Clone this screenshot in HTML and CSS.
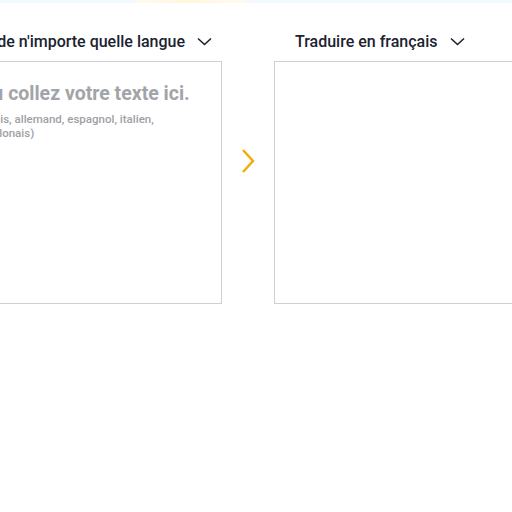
FILE: index.html
```html
<!DOCTYPE html>
<html lang="fr">
<head>
<meta charset="utf-8">
<link rel="stylesheet" href="styles.css">
</head>
<body>
<div class="topstrip"><div class="topglow"></div></div>
<main class="translator">
  <section class="panel panel--src">
    <div class="panel-head">
      <span class="lang">Traduire de n'importe quelle langue</span>
      <svg class="chev" width="15" height="9" viewBox="0 0 15 9"><path d="M1 1.5 L7.5 7.5 L14 1.5" fill="none" stroke="#1b2230" stroke-width="1.6"/></svg>
    </div>
    <div class="box">
      <p class="ph">Tapez ou collez votre texte ici.</p>
      <p class="ph-sub">(français, anglais, allemand, espagnol, italien, néerlandais, polonais)</p>
    </div>
  </section>
  <div class="swap">
    <svg width="16" height="26" viewBox="0 0 16 26"><path d="M3 2 L13 13 L3 24" fill="none" stroke="#f0ac00" stroke-width="2.4"/></svg>
  </div>
  <section class="panel">
    <div class="panel-head">
      <span class="lang">Traduire en français</span>
      <svg class="chev" width="15" height="9" viewBox="0 0 15 9"><path d="M1 1.5 L7.5 7.5 L14 1.5" fill="none" stroke="#1b2230" stroke-width="1.6"/></svg>
    </div>
    <div class="box"></div>
  </section>
</main>
</body>
</html>
```
FILE: styles.css
```css
html, body {
  margin: 0;
  padding: 0;
  background: #ffffff;
  overflow: hidden;
}
body {
  font-family: Roboto, "Liberation Sans", sans-serif;
  width: 512px;
  height: 512px;
}
.topstrip {
  height: 3px;
  background: #f3fafd;
  display: flex;
  justify-content: flex-start;
}
.topglow {
  margin-left: 135px;
  width: 110px;
  height: 3px;
  background: linear-gradient(90deg, #fdfbf0, #fff7dc, #fdfbf0);
}
.translator {
  display: flex;
  margin-left: -97px;
  margin-top: 27px;
  width: 690px;
}
.panel {
  width: 319px;
  flex: none;
  display: flex;
  flex-direction: column;
}
.panel-head {
  height: 22px;
  margin-bottom: 9px;
  display: flex;
  align-items: center;
  gap: 12px;
  padding-left: 21px;
}
.panel--src .panel-head {
  padding-left: 31px;
}
.lang {
  font-size: 16px;
  font-weight: 500;
  color: #1b2230;
}
.chev { display: block; margin-top: 1px; }
.box {
  height: 243px;
  box-sizing: border-box;
  border: 1.5px solid #d0d0d3;
  padding: 20px 20px;
}
.ph {
  margin: 0;
  font-size: 19.5px;
  font-weight: 700;
  color: #a3a4a9;
  line-height: 24px;
}
.ph-sub {
  margin: 6px 0 0 -3px;
  font-size: 11.5px;
  font-weight: 500;
  color: #9e9fa4;
  line-height: 14px;
  width: 240px;
}
.swap {
  width: 52px;
  flex: none;
  display: flex;
  justify-content: center;
  align-items: flex-start;
  padding-top: 118px;
  box-sizing: border-box;
}
.swap svg { display: block; }
```
